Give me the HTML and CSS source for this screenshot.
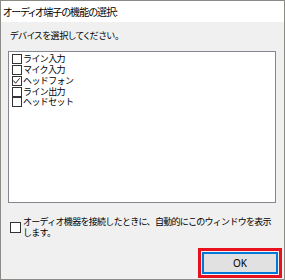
FILE: index.html
```html
<!DOCTYPE html>
<html lang="ja">
<head>
<meta charset="utf-8">
<link rel="stylesheet" href="styles.css">
</head>
<body>
<div class="window">
  <div class="title">オーディオ端子の機能の選択:</div>
  <div class="content">
    <div class="prompt">デバイスを選択してください。</div>
    <div class="list">
      <div class="item"><span class="cb"></span><span class="label">ライン入力</span></div>
      <div class="item"><span class="cb"></span><span class="label">マイク入力</span></div>
      <div class="item"><span class="cb"><svg viewBox="0 0 10 10" width="10" height="10"><polyline points="1.5,4.5 4,7.5 8.5,2" fill="none" stroke="#222" stroke-width="1.1"/></svg></span><span class="label">ヘッドフォン</span></div>
      <div class="item"><span class="cb"></span><span class="label">ライン出力</span></div>
      <div class="item"><span class="cb"></span><span class="label">ヘッドセット</span></div>
    </div>
    <div class="auto">
      <span class="cb big"></span>
      <span class="auto-text">オーディオ機器を接続したときに、自動的にこのウィンドウを表示<br>します。</span>
    </div>
    <div class="actions">
      <div class="highlight"><button class="ok">OK</button></div>
    </div>
  </div>
</div>
</body>
</html>
```

FILE: styles.css
```css
* { box-sizing: border-box; }
html, body { margin: 0; padding: 0; background: #fff; }
body {
  font-family: "Noto Sans CJK JP", "Noto Sans", sans-serif;
  font-size: 9px;
  color: #000;
}
.window {
  width: 285px;
  height: 280px;
  border: 1px solid #8a8a86;
  display: flex;
  flex-direction: column;
  background: #f0f0f0;
}
.title {
  height: 21px;
  background: #fff;
  padding-left: 2px;
  line-height: 22px;
  font-size: 10px;
  font-feature-settings: "palt";
  letter-spacing: -0.9px;
  white-space: nowrap;
}
.content {
  flex: 1;
  padding: 8px 8px 0 7px;
  display: flex;
  flex-direction: column;
}
.prompt {
  height: 12px;
  line-height: 12px;
  padding-left: 2px;
  font-feature-settings: "palt";
  letter-spacing: -0.1px;
  white-space: nowrap;
}
.list {
  margin-top: 9px;
  height: 152px;
  background: #fff;
  border: 1px solid #828790;
  padding: 2px 3px;
}
.item {
  height: 10.75px;
  display: flex;
  align-items: center;
}
.cb {
  width: 10px;
  height: 10px;
  border: 1px solid #333;
  background: #fff;
  flex: none;
  display: flex;
}
.cb svg { margin: -1px 0 0 -1px; }
.label {
  margin-left: 1px;
  line-height: 10px;
  letter-spacing: -0.6px;
  white-space: nowrap;
}
.auto {
  margin-top: 13px;
  display: flex;
  align-items: center;
  padding-left: 2px;
}
.cb.big { width: 11px; height: 11px; }
.auto-text {
  margin-left: 2px;
  line-height: 11px;
  letter-spacing: -0.7px;
  white-space: nowrap;
}
.actions {
  margin-top: 10px;
  display: flex;
  justify-content: flex-end;
  margin-right: -6px;
}
.highlight {
  width: 84px;
  height: 30px;
  border: 3px solid #e8101c;
  padding: 1px;
  background: #f0f0f0;
}
.ok {
  width: 100%;
  height: 100%;
  margin: 0;
  background: #e1e1e1;
  border: 2px solid #0078d7;
  font-family: "Noto Sans", sans-serif;
  font-size: 10px;
  color: #000;
  padding: 0;
  line-height: 1;
}
```
